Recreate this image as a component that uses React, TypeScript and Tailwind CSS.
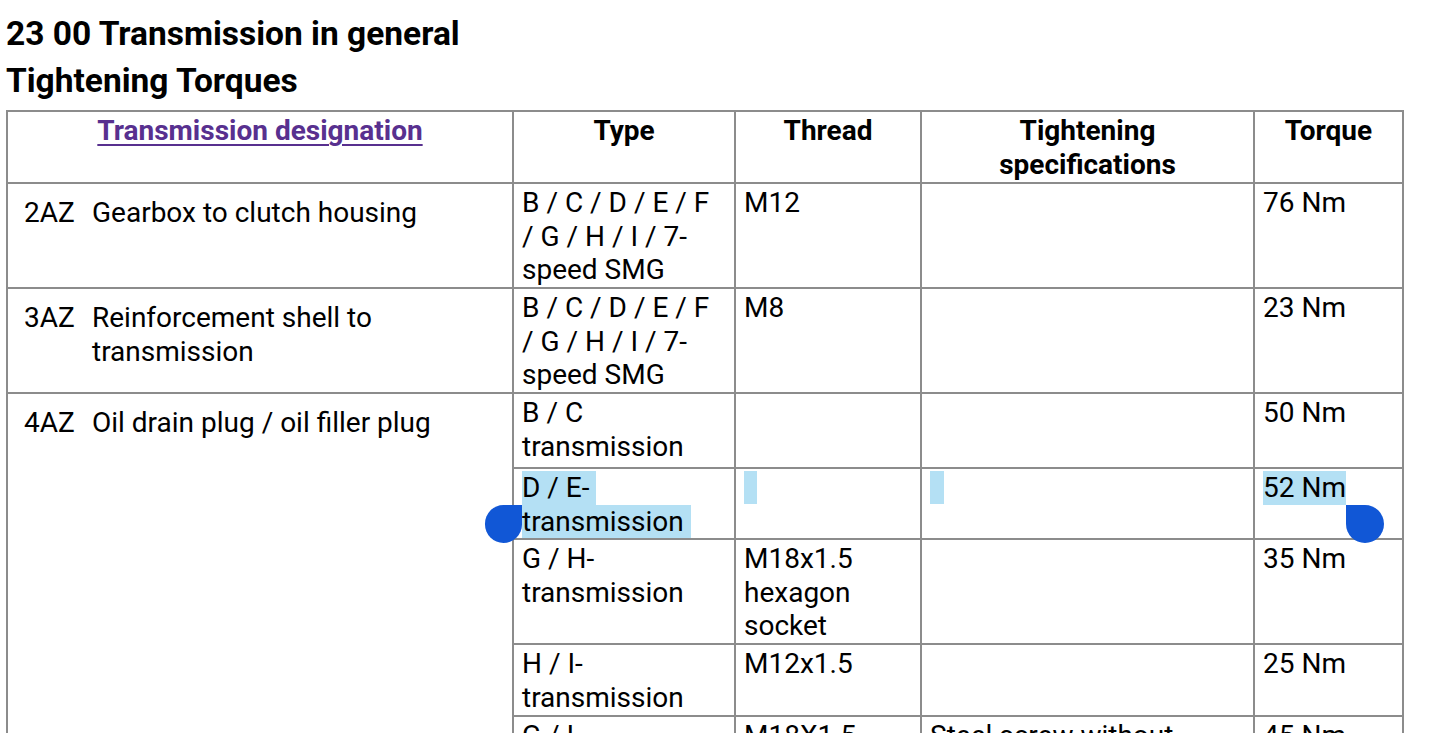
import React from 'react';

const cell = 'border-2 border-[#8c8c8c] align-top px-[8px] pt-[2px] pb-0';
const head = 'border-2 border-[#8c8c8c] align-top px-[8px] pt-[2px] text-center font-bold';
const hl = 'bg-[#b4e0f4]';

const Handle = ({ side }: { side: 'left' | 'right' }) => (
  <span
    className={
      side === 'left'
        ? 'absolute right-full top-0 h-[38px] w-[37px] rounded-full rounded-tr-none bg-[#1157d6]'
        : 'absolute left-full top-full h-[38px] w-[38px] rounded-full rounded-tl-none bg-[#1157d6]'
    }
  />
);

const Item = ({ code, children }: { code: string; children: React.ReactNode }) => (
  <div className="flex pl-[16px] pt-[12px]">
    <span className="w-[68px] shrink-0">{code}</span>
    <span>{children}</span>
  </div>
);

export default function App() {
  return (
    <div className="min-h-screen bg-white px-[6px] pt-[10px] text-black [font-family:Roboto,'Noto_Sans',sans-serif]">
      <h1 className="text-[33.5px] font-bold leading-[47px]">23 00 Transmission in general</h1>
      <h2 className="text-[33.5px] font-bold leading-[47px]">Tightening Torques</h2>

      <table className="mt-[6px] w-[1396px] table-fixed border-collapse text-[28px] leading-[33.5px]">
        <colgroup>
          <col className="w-[506px]" />
          <col className="w-[222px]" />
          <col className="w-[186px]" />
          <col className="w-[333px]" />
          <col className="w-[149px]" />
        </colgroup>
        <thead>
          <tr className="h-[72px]">
            <th className={head}>
              <a href="#" className="text-[#58308f] underline decoration-2 underline-offset-[4px]">
                Transmission designation
              </a>
            </th>
            <th className={head}>Type</th>
            <th className={head}>Thread</th>
            <th className={head}>
              Tightening
              <br />
              specifications
            </th>
            <th className={head}>Torque</th>
          </tr>
        </thead>
        <tbody>
          <tr className="h-[105px]">
            <td className={cell + ' !p-0'}>
              <Item code="2AZ">Gearbox to clutch housing</Item>
            </td>
            <td className={cell}>
              B / C / D / E / F<br />/ G / H / I / 7-<br />speed SMG
            </td>
            <td className={cell}>M12</td>
            <td className={cell}></td>
            <td className={cell}>76 Nm</td>
          </tr>
          <tr className="h-[105px]">
            <td className={cell + ' !p-0'}>
              <Item code="3AZ">
                Reinforcement shell to
                <br />
                transmission
              </Item>
            </td>
            <td className={cell}>
              B / C / D / E / F<br />/ G / H / I / 7-<br />speed SMG
            </td>
            <td className={cell}>M8</td>
            <td className={cell}></td>
            <td className={cell}>23 Nm</td>
          </tr>
          <tr className="h-[75px]">
            <td rowSpan={6} className={cell + ' !p-0'}>
              <Item code="4AZ">Oil drain plug / oil filler plug</Item>
            </td>
            <td className={cell}>
              B / C<br />transmission
            </td>
            <td className={cell}></td>
            <td className={cell}></td>
            <td className={cell}>50 Nm</td>
          </tr>
          <tr className="h-[71px]">
            <td className={cell}>
              <span className={'inline-block ' + hl}>D / E-&nbsp;</span>
              <br />
              <span className={'relative inline-block ' + hl}>
                <Handle side="left" />
                transmission&nbsp;
              </span>
            </td>
            <td className={cell}>
              <span className={'inline-block h-[33px] w-[13px] align-top ' + hl} />
            </td>
            <td className={cell}>
              <span className={'inline-block h-[33px] w-[14px] align-top ' + hl} />
            </td>
            <td className={cell}>
              <span className={'relative inline-block ' + hl}>
                52 Nm
                <Handle side="right" />
              </span>
            </td>
          </tr>
          <tr className="h-[105px]">
            <td className={cell}>
              G / H-<br />transmission
            </td>
            <td className={cell}>
              M18x1.5
              <br />
              hexagon
              <br />
              socket
            </td>
            <td className={cell}></td>
            <td className={cell}>35 Nm</td>
          </tr>
          <tr className="h-[72px]">
            <td className={cell}>
              H / I-<br />transmission
            </td>
            <td className={cell}>M12x1.5</td>
            <td className={cell}></td>
            <td className={cell}>25 Nm</td>
          </tr>
          <tr className="h-[105px]">
            <td className={cell}>
              G / I-<br />transmission
            </td>
            <td className={cell}>M18X1.5</td>
            <td className={cell}>
              Steel screw without
              <br />
              sealing ring
            </td>
            <td className={cell}>45 Nm</td>
          </tr>
        </tbody>
      </table>
    </div>
  );
}
